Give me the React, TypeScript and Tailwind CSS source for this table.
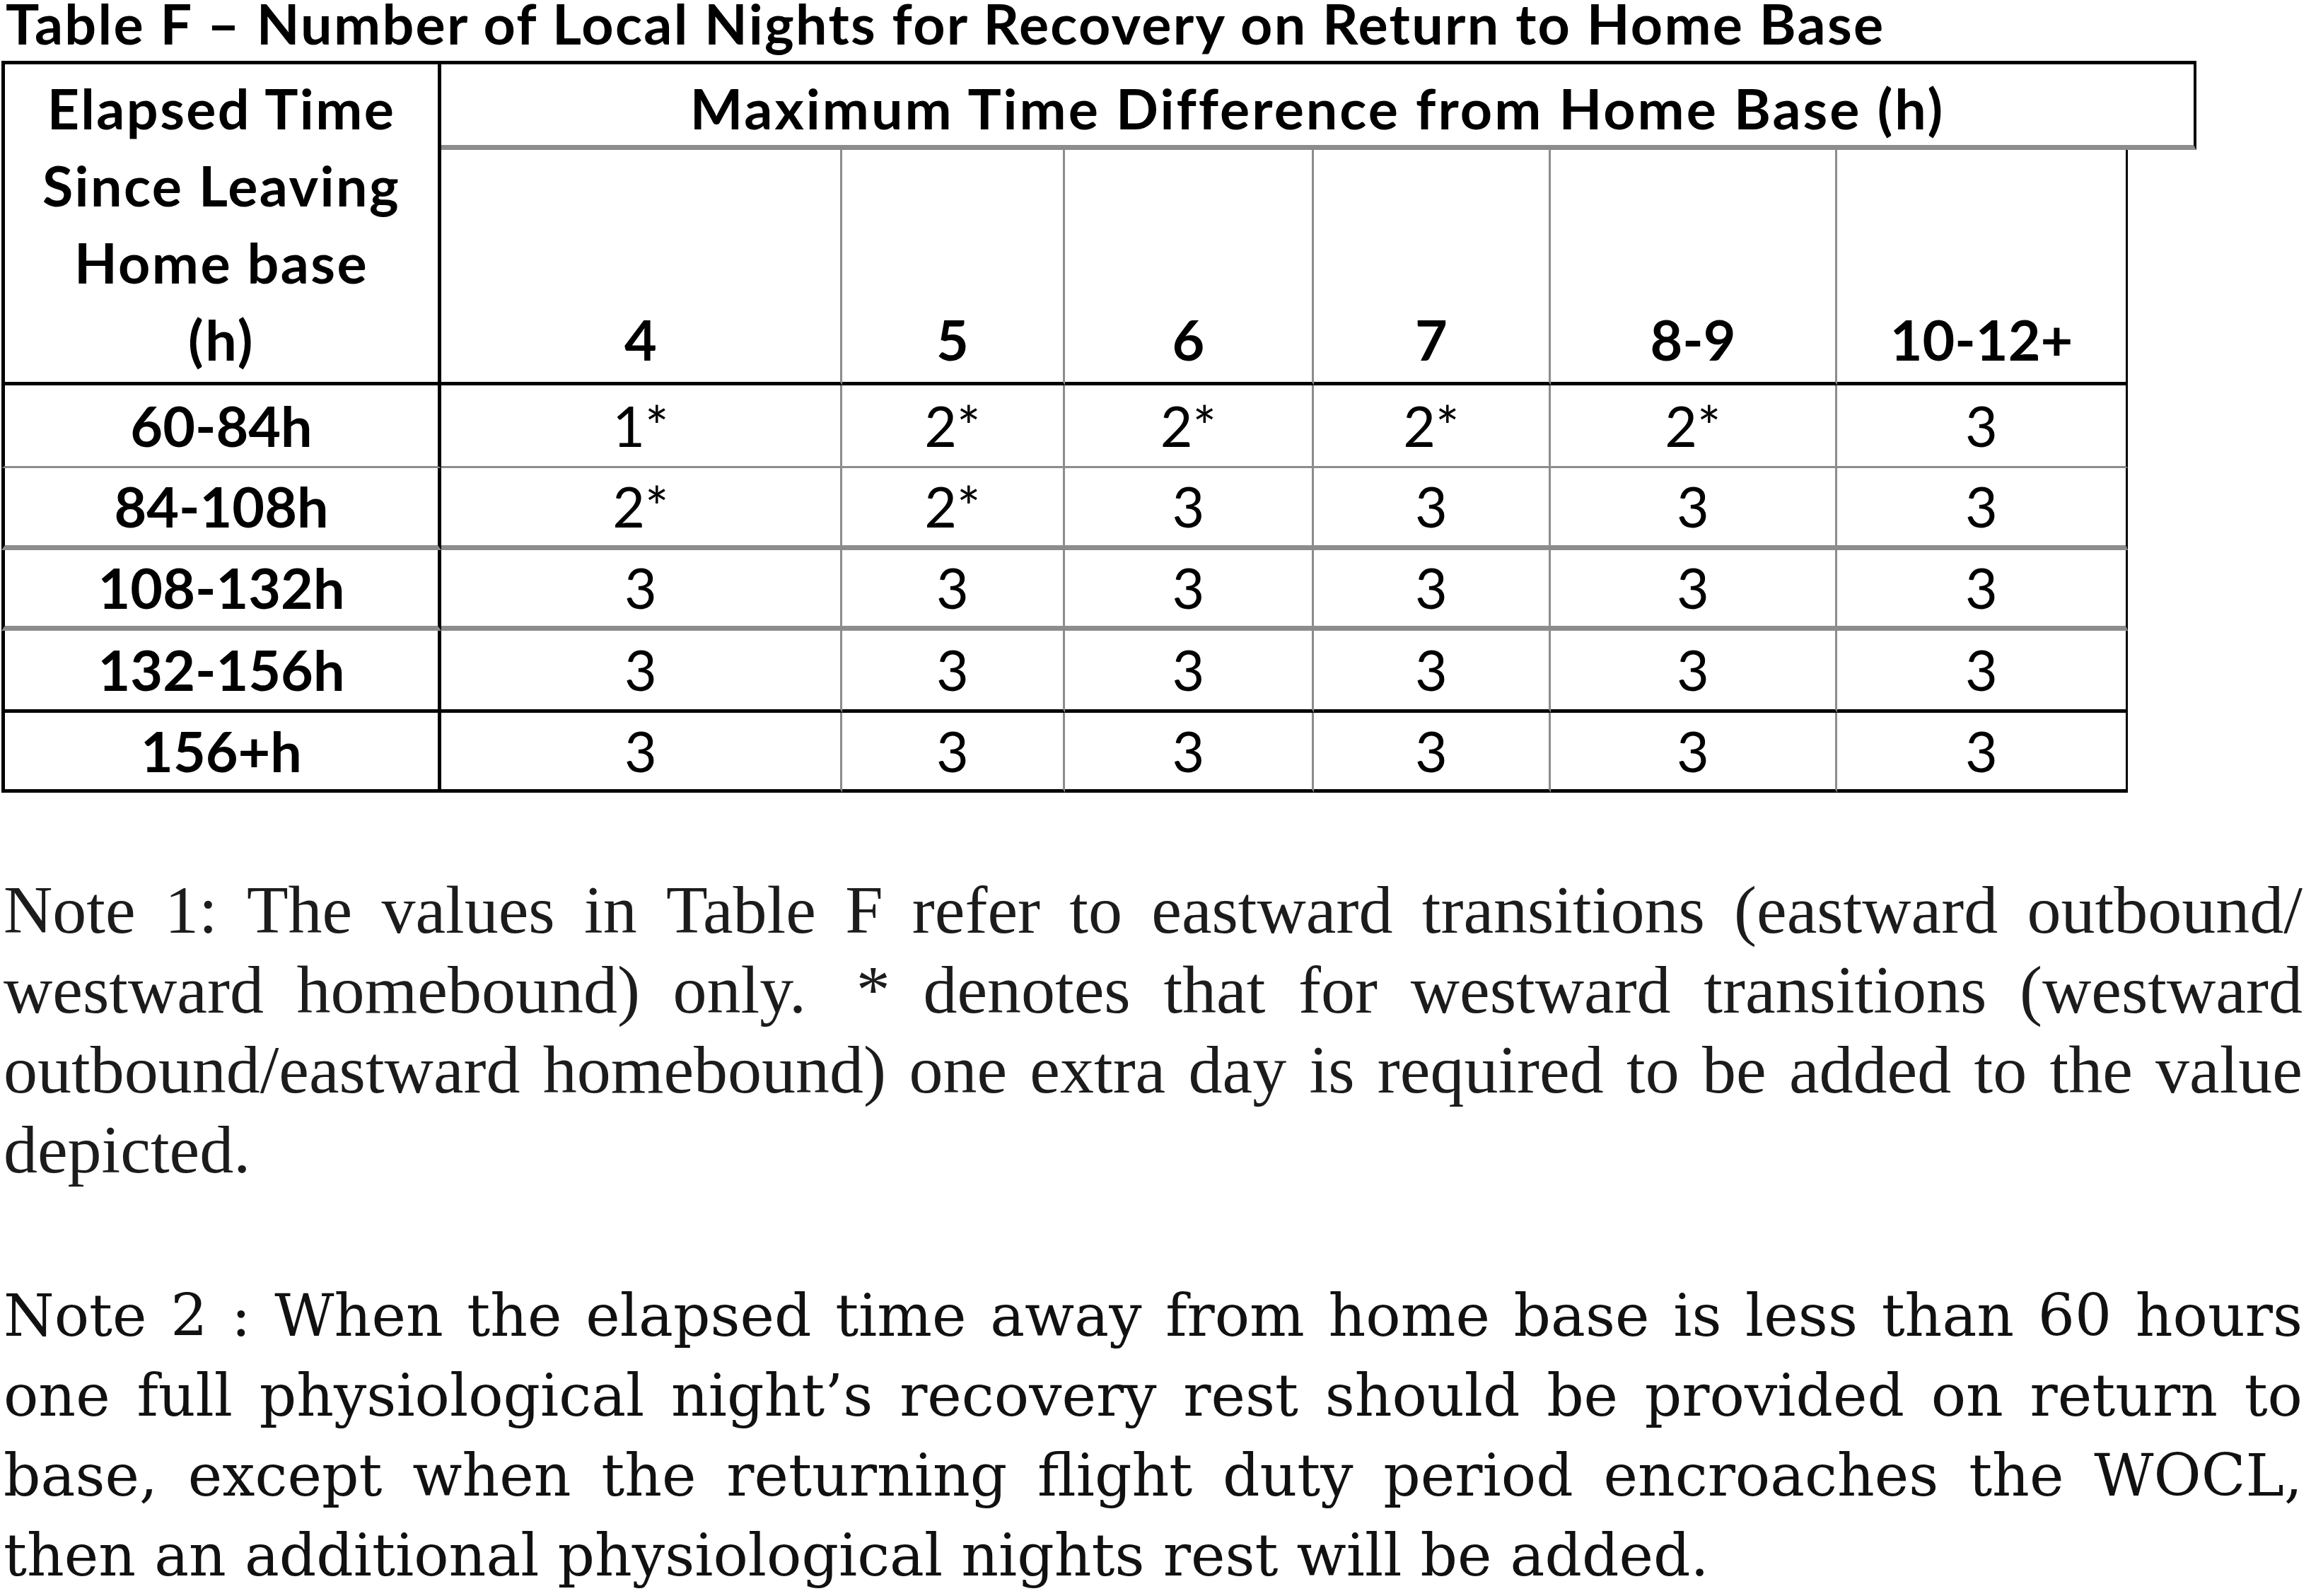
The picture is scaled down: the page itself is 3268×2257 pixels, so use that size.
const heads = ["4", "5", "6", "7", "8-9", "10-12+"];

const rows = [
  { label: "60-84h", values: ["1*", "2*", "2*", "2*", "2*", "3"], line: "border-b-[3px] border-b-[#8c8c8c]" },
  { label: "84-108h", values: ["2*", "2*", "3", "3", "3", "3"], line: "border-b-[7px] border-b-[#8c8c8c]" },
  { label: "108-132h", values: ["3", "3", "3", "3", "3", "3"], line: "border-b-[7px] border-b-[#8c8c8c]" },
  { label: "132-156h", values: ["3", "3", "3", "3", "3", "3"], line: "border-b-[5px] border-b-black" },
  { label: "156+h", values: ["3", "3", "3", "3", "3", "3"], line: "border-b-[5px] border-b-black" },
];

const note1 = [
  "Note 1: The values in Table F refer to eastward transitions (eastward outbound/",
  "westward homebound) only.\u00a0 * denotes that for westward transitions (westward",
  "outbound/eastward homebound) one extra day is required to be added to the value",
];

const note2 = [
  "Note 2 : When the elapsed time away from home base is less than 60 hours",
  "one full physiological night’s recovery rest should be provided on return to",
  "base, except when the returning flight duty period encroaches the WOCL,",
];

function JustifiedLine({ text }: { text: string }) {
  return (
    <div className="flex justify-between leading-[113px] whitespace-pre">
      {text.split(" ").map((w, i) => (
        <span key={i}>{w}</span>
      ))}
    </div>
  );
}

export default function App() {
  return (
    <div className="bg-white w-[3268px] min-h-[2257px] text-black">
      <div className="pl-[8px] font-['Lato',sans-serif] font-bold text-[79px] tracking-[2.3px] leading-[66px] whitespace-nowrap">
        Table F – Number of Local Nights for Recovery on Return to Home Base
      </div>

      <div className="pl-[2px] mt-[20px]">
        <div className="grid grid-cols-[622px_567px_315px_352px_335px_405px_411px_97px] grid-rows-[126px_333px_117px_116px_114px_116px_113px] font-['Lato',sans-serif] text-[79px]">
          {/* left header cell, spans both header rows */}
          <div className="row-span-2 flex flex-col items-center justify-end pb-[6px] border-[5px] border-black font-bold tracking-[2.4px] leading-[109px]">
            <div>Elapsed Time</div>
            <div>Since Leaving</div>
            <div>Home base</div>
            <div>(h)</div>
          </div>
          <div className="col-span-7 flex justify-center pt-[7px] border-t-[5px] border-r-[4px] border-b-[7px] border-t-black border-r-black border-b-[#8c8c8c] font-bold tracking-[3px] leading-[109px] whitespace-nowrap">
            Maximum Time Difference from Home Base (h)
          </div>
          {heads.map((h, i) => (
            <div
              key={h}
              className={
                i === 5
                  ? "flex items-end justify-center pb-[6px] border-r-[3px] border-b-[5px] border-r-black border-b-black font-bold leading-[109px]"
                  : "flex items-end justify-center pb-[6px] border-r-[3px] border-b-[5px] border-r-[#8c8c8c] border-b-black font-bold leading-[109px]"
              }
            >
              {h}
            </div>
          ))}
          <div></div>

          {rows.map((r) => (
            <div key={r.label} className="contents">
              <div className={"flex items-center justify-center border-l-[5px] border-r-[5px] border-l-black border-r-black font-bold " + r.line}>
                {r.label}
              </div>
              {r.values.map((v, i) => (
                <div
                  key={i}
                  className={
                    (i === 5
                      ? "flex items-center justify-center border-r-[3px] border-r-black "
                      : "flex items-center justify-center border-r-[3px] border-r-[#8c8c8c] ") + r.line
                  }
                >
                  {v}
                </div>
              ))}
              <div></div>
            </div>
          ))}
        </div>
      </div>

      <div className="pl-[5px] w-[3256px] mt-[109px] font-['Liberation_Serif',serif] text-[96px] text-[#1c1c1c]">
        {note1.map((l, i) => (
          <JustifiedLine key={i} text={l} />
        ))}
        <div className="leading-[113px]">depicted.</div>
      </div>

      <div className="pl-[5px] w-[3256px] mt-[122px] font-['DejaVu_Serif',serif] text-[82px] text-[#111]">
        {note2.map((l, i) => (
          <JustifiedLine key={i} text={l} />
        ))}
        <div className="leading-[113px] whitespace-nowrap">then an additional physiological nights rest will be added.</div>
      </div>
    </div>
  );
}
